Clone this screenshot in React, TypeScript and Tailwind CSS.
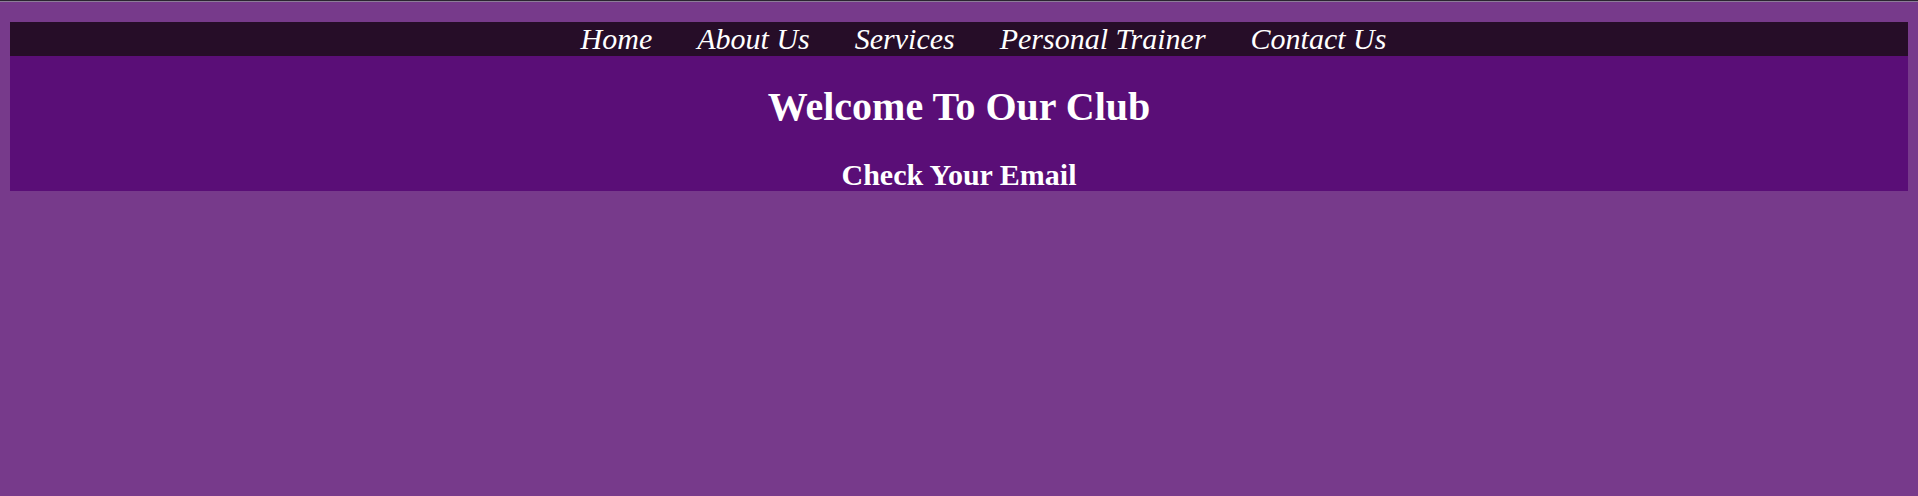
const links = ['Home', 'About Us', 'Services', 'Personal Trainer', 'Contact Us'];

export default function App() {
  return (
    <div className="min-h-[496px] bg-[#773a8b] font-['Liberation_Serif','Times_New_Roman',serif] text-white">
      {/* thin strip at the very top */}
      <div className="h-[1px] bg-[#2b2430]" />
      <div className="h-[1px] bg-[#8c7d98]" />

      <div className="px-[10px] pt-[20px]">
        <div className="bg-[#5a0e77]">
          <nav className="h-[34px] bg-[#260d28]">
            <ul className="flex h-full items-center justify-center gap-[45px] pl-[49px]">
              {links.map((link) => (
                <li key={link}>
                  <a href="#" className="text-[30px] italic leading-[34px] text-white">
                    {link}
                  </a>
                </li>
              ))}
            </ul>
          </nav>

          <h1 className="mt-[28px] text-center text-[40px] font-bold leading-[45px]">
            Welcome To Our Club
          </h1>
          <h2 className="mt-[30px] text-center text-[30px] font-bold leading-[32px]">
            Check Your Email
          </h2>
        </div>
      </div>
    </div>
  );
}
